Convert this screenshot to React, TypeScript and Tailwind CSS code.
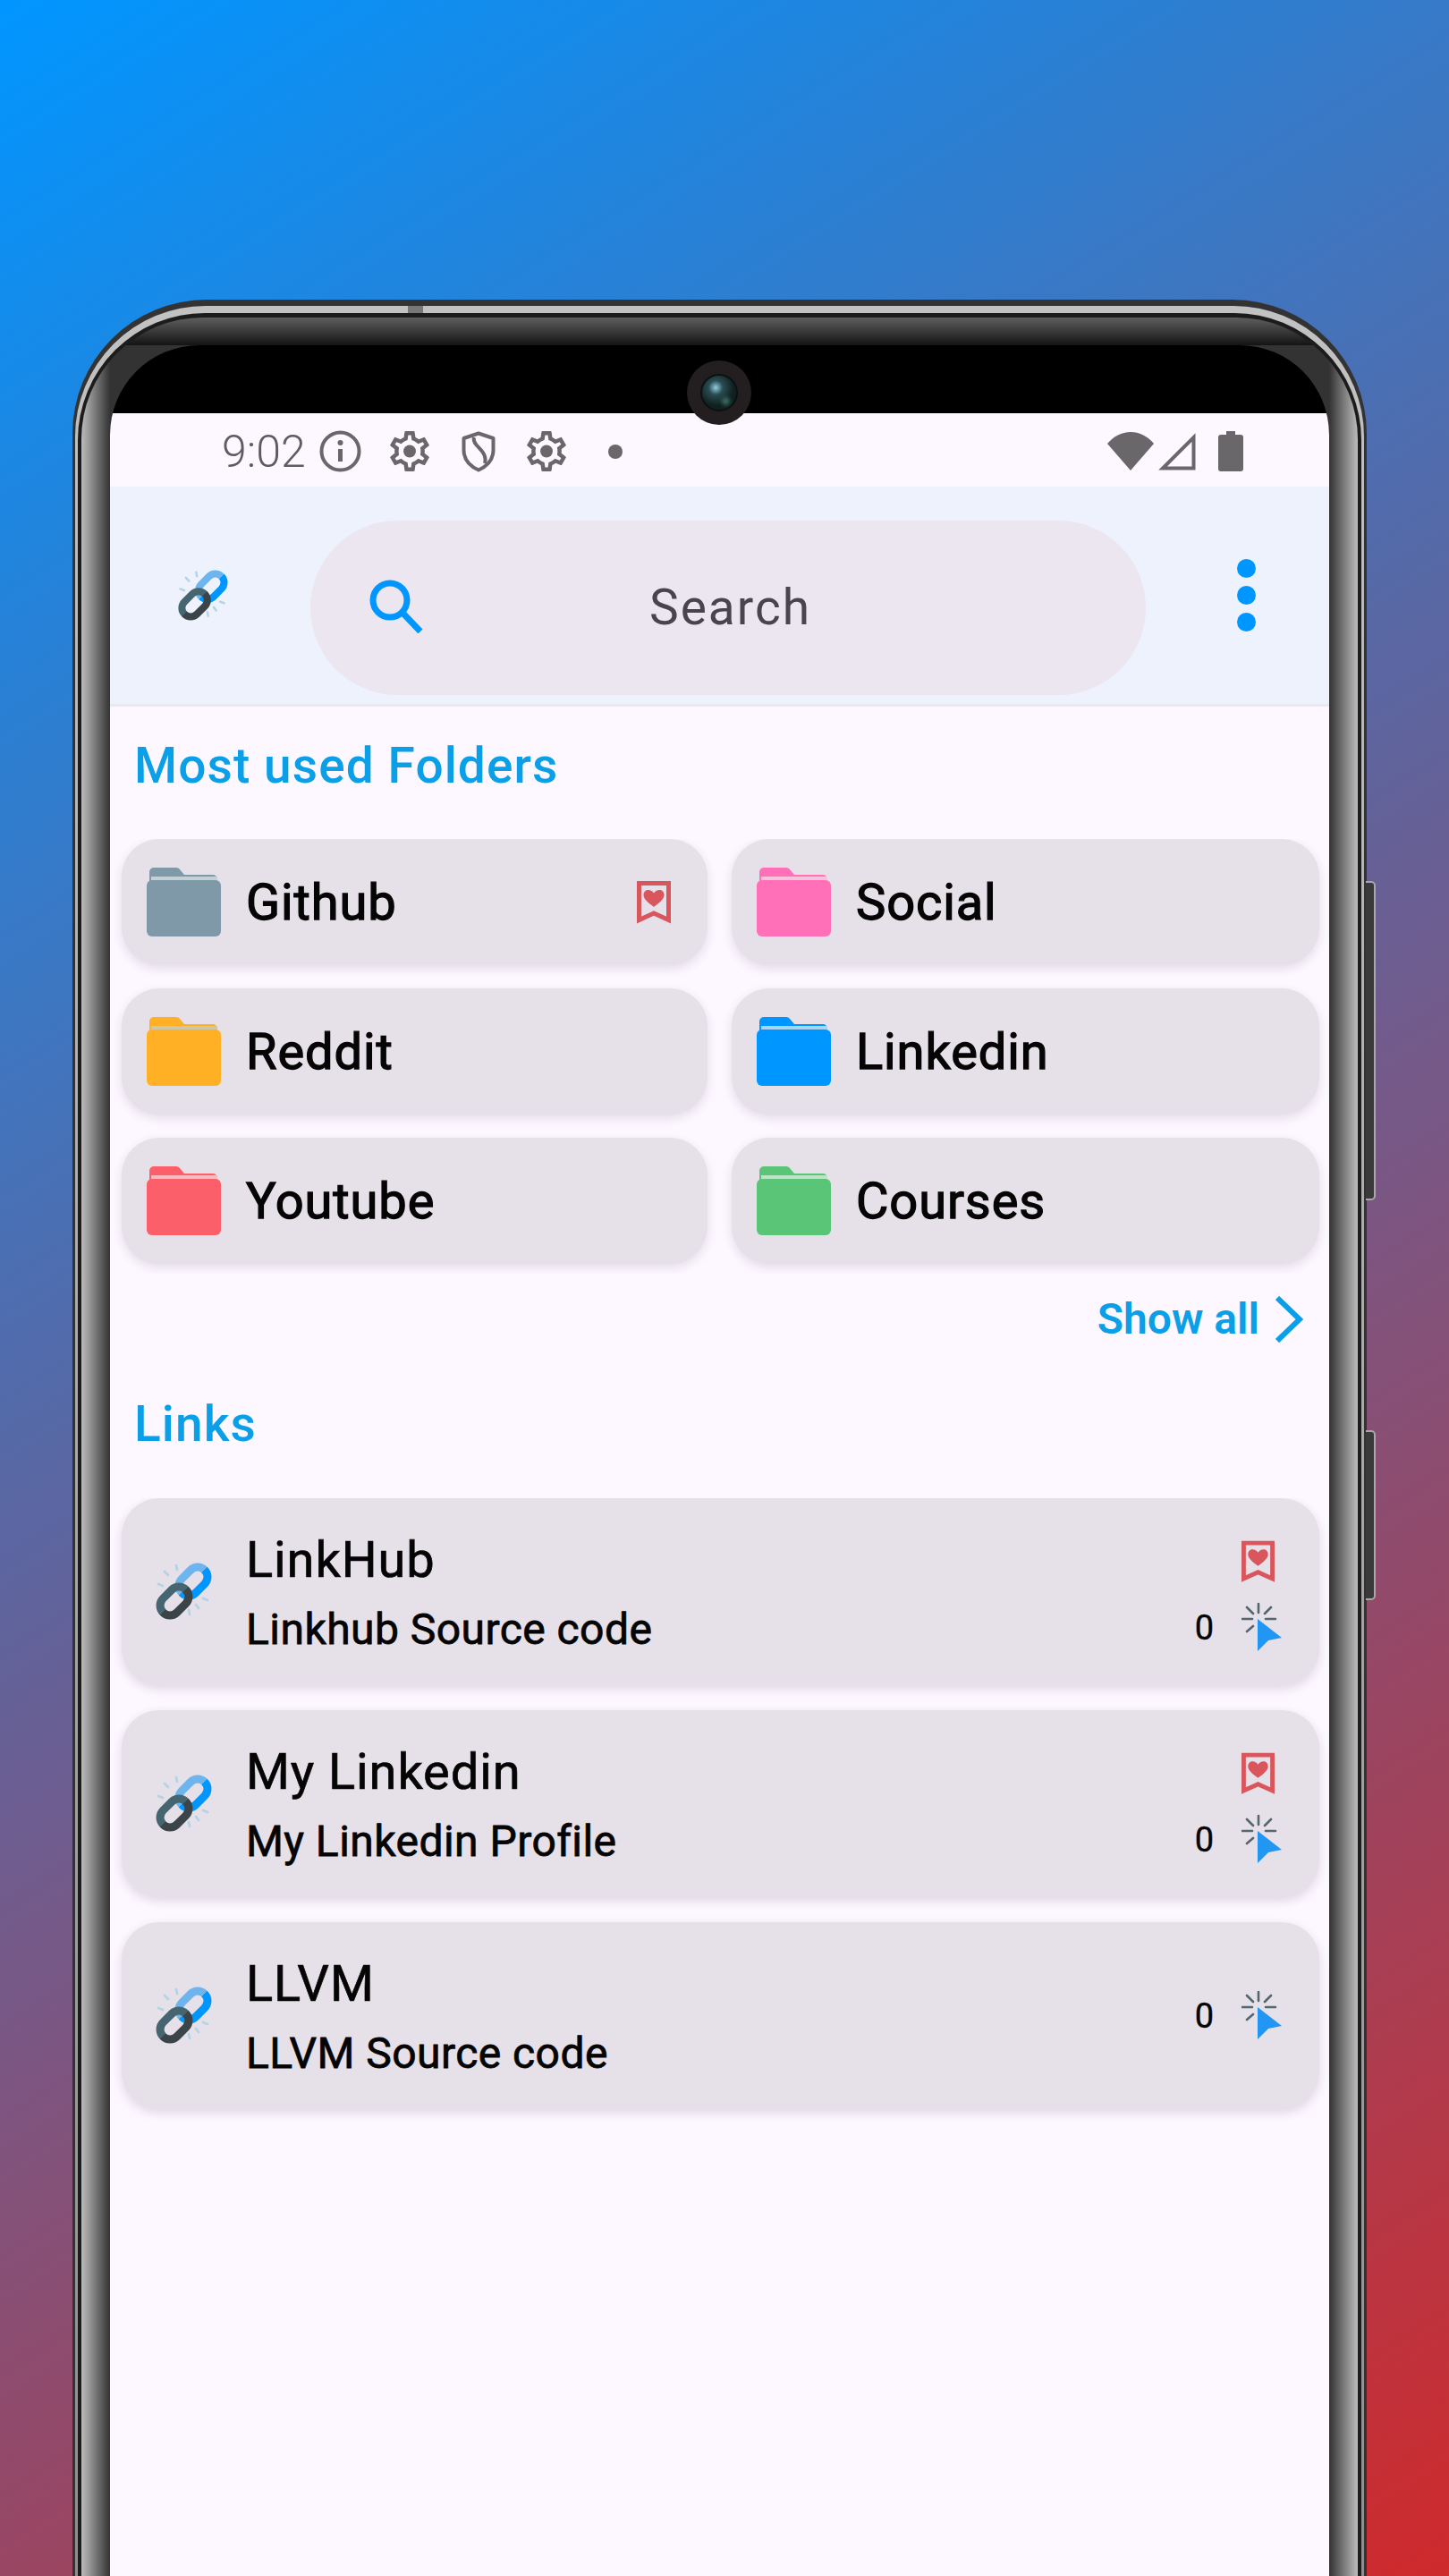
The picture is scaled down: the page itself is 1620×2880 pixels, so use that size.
import React from "react";

const GEAR = "M19.43 12.98c.04-.32.07-.64.07-.98 0-.34-.03-.66-.07-.98l2.11-1.65c.19-.15.24-.42.12-.64l-2-3.46c-.09-.16-.26-.25-.44-.25-.06 0-.12.01-.17.03l-2.49 1c-.52-.4-1.08-.73-1.69-.98l-.38-2.65C14.46 2.18 14.25 2 14 2h-4c-.25 0-.46.18-.49.42l-.38 2.65c-.61.25-1.17.59-1.69.98l-2.49-1c-.06-.02-.12-.03-.18-.03-.17 0-.34.09-.43.25l-2 3.46c-.13.22-.07.49.12.64l2.11 1.65c-.04.32-.07.65-.07.98 0 .33.03.66.07.98l-2.11 1.65c-.19.15-.24.42-.12.64l2 3.46c.09.16.26.25.44.25.06 0 .12-.01.17-.03l2.49-1c.52.4 1.08.73 1.69.98l.38 2.65c.03.24.24.42.49.42h4c.25 0 .46-.18.49-.42l.38-2.65c.61-.25 1.17-.59 1.69-.98l2.49 1c.06.02.12.03.18.03.17 0 .34-.09.43-.25l2-3.46c.12-.22.07-.49-.12-.64l-2.11-1.65zm-1.98-1.71c.04.31.05.52.05.73 0 .21-.02.43-.05.73l-.14 1.13.89.7 1.08.84-.7 1.21-1.27-.51-1.04-.42-.9.68c-.43.32-.84.56-1.25.73l-1.06.43-.16 1.13-.2 1.35h-1.4l-.19-1.35-.16-1.13-1.06-.43c-.43-.18-.83-.41-1.23-.71l-.91-.7-1.06.43-1.27.51-.7-1.21 1.08-.84.89-.7-.14-1.13c-.03-.31-.05-.54-.05-.74s.02-.43.05-.73l.14-1.13-.89-.7-1.08-.84.7-1.21 1.27.51 1.04.42.9-.68c.43-.32.84-.56 1.25-.73l1.06-.43.16-1.13.2-1.35h1.39l.19 1.35.16 1.13 1.06.43c.43.18.83.41 1.23.71l.91.7 1.06-.43 1.27-.51.7 1.21-1.07.85-.89.7.14 1.13z";

function Gear({ className }: { className: string }) {
  return (
    <svg viewBox="2.2 2 19.6 20" className={className} fill="#6a676b">
      <path d={GEAR} />
      <circle cx="12" cy="12" r="3.1" />
    </svg>
  );
}

function Folder({ body, tab, strip }: { body: string; tab: string; strip: string }) {
  return (
    <svg viewBox="0 0 83 77" className="h-[77px] w-[83px] shrink-0">
      <path d="M3 16V5a5 5 0 0 1 5-5h25a5 5 0 0 1 4 2l5 6h32a5 5 0 0 1 5 5v5H3z" fill={tab} />
      <rect x="5" y="10" width="74" height="6" fill={strip} />
      <path d="M0 20a6 6 0 0 1 6-6h71a6 6 0 0 1 6 6v51a6 6 0 0 1-6 6H6a6 6 0 0 1-6-6z" fill={body} />
    </svg>
  );
}

function Bookmark({ className }: { className: string }) {
  return (
    <svg viewBox="0 0 38 48" className={className}>
      <path d="M2.5 2.5h33v41L19 36 2.5 43.5z" fill="none" stroke="#d9575c" strokeWidth="5" />
      <path d="M19 29c-8-6-11.5-9.500-11.500-13.500C7.500 12 10 10 12.700 10c2.700 0 4.800 1.300 6.300 3.600C20.500 11.300 22.600 10 25.300 10c2.700 0 5.200 2 5.200 5.500C30.500 19.500 27 23 19 29z" fill="#d9575c" />
    </svg>
  );
}

function Click() {
  return (
    <svg viewBox="0 0 45 55" className="h-[55px] w-[45px] shrink-0">
      <g stroke="#56666e" strokeWidth="2.600" strokeLinecap="round">
        <path d="M19 1v10M1 18h11M27 18h11M6 5l7 7M33 5l-7 7M6 32l7-6" />
      </g>
      <path d="M18 18l27 21-15 3-12 12z" fill="#2196f3" />
    </svg>
  );
}

function LinkIcon({ className }: { className: string }) {
  return (
    <svg viewBox="0 0 64 65" className={className}>
      <defs>
        <linearGradient id="blueLink" x1="0" y1="0" x2="0" y2="1">
          <stop offset="0.5" stopColor="#6db5ec" />
          <stop offset="0.5" stopColor="#0096ff" />
        </linearGradient>
        <linearGradient id="darkLink" x1="0" y1="0" x2="0" y2="1">
          <stop offset="0.5" stopColor="#456570" />
          <stop offset="0.5" stopColor="#3b4448" />
        </linearGradient>
      </defs>
      <g stroke="#b4d3e6" strokeWidth="2.800" strokeLinecap="round">
        <path d="M11 10l4 4M4 24l5 2M24 3l1 5M54 40l5 2M49 51l-3-4M39 58l-1-5" />
      </g>
      <rect x="25" y="10" width="36" height="22" rx="11" transform="rotate(-45 43 21)" fill="none" stroke="url(#blueLink)" strokeWidth="9" />
      <rect x="4" y="32" width="36" height="22" rx="11" transform="rotate(-45 22 43)" fill="none" stroke="url(#darkLink)" strokeWidth="9" />
    </svg>
  );
}

const folders = [
  { name: "Github", body: "#7f99a9", tab: "#7f99a9", strip: "#c3d0d6", mark: true },
  { name: "Social", body: "#ff70b8", tab: "#ff70b8", strip: "#f6c3dc", mark: false },
  { name: "Reddit", body: "#ffb024", tab: "#ffb024", strip: "#cfc6a8", mark: false },
  { name: "Linkedin", body: "#0096ff", tab: "#0096ff", strip: "#a9d4f3", mark: false },
  { name: "Youtube", body: "#fb5f69", tab: "#fb5f69", strip: "#f2bcc0", mark: false },
  { name: "Courses", body: "#5ac577", tab: "#5ac577", strip: "#bfe2c8", mark: false },
];

const links = [
  { title: "LinkHub", sub: "Linkhub Source code", mark: true },
  { title: "My Linkedin", sub: "My Linkedin Profile", mark: true },
  { title: "LLVM", sub: "LLVM Source code", mark: false },
];

export default function App() {
  return (
    <div className="h-[2880px] w-[1620px] overflow-hidden bg-[linear-gradient(148deg,#0096ff_0%,#cf2a2c_100%)] pl-[81px] pt-[335px] font-['Roboto',sans-serif]">
      <div className="relative h-[2700px] w-[1447px]">
        {/* side buttons */}
        <div className="absolute left-[1446px] top-[650px] h-[357px] w-[11px] rounded-r-[5px] border-2 border-l-0 border-[#a8a8a8] bg-[#3a3a3a]" />
        <div className="absolute left-[1446px] top-[1264px] h-[190px] w-[11px] rounded-r-[5px] border-2 border-l-0 border-[#a8a8a8] bg-[#3a3a3a]" />
        {/* frame */}
        <div className="h-full rounded-t-[150px] bg-[#333333] px-[3px] pt-[7px]">
          <div className="relative h-full rounded-t-[146px] bg-[linear-gradient(180deg,#c2c2c2,#8c8c8c)] px-[3px] pt-[8px]">
            <div className="absolute left-[372px] top-0 h-[8px] w-[17px] bg-[#777777]" />
            <div className="h-full rounded-t-[142px] bg-[#1c1c1c] px-[4px] pt-[5px]">
              <div className="h-full rounded-t-[136px] bg-[linear-gradient(180deg,#5e5e5e_0px,#141414_31px,transparent_31px),linear-gradient(90deg,#bcbcbc_0px,#333333_32px,#333333_calc(100%-32px),#bcbcbc_100%)] px-[32px] pt-[31px]">
                <div className="relative h-full overflow-hidden rounded-t-[100px] bg-black pt-[76px]">
                  {/* camera */}
                  <div className="absolute left-[645px] top-[17px] z-10 flex h-[72px] w-[72px] items-center justify-center rounded-full bg-[#231f20]">
                    <div className="relative h-[42px] w-[42px] rounded-full border-2 border-[#0c1012] bg-[radial-gradient(circle_at_40%_35%,#8fd0dc_0px,#2a4c54_8px,#10201f_20px)]">
                      <div className="absolute left-[22px] top-[24px] h-[9px] w-[9px] rounded-full bg-[#3c6a60] blur-[2px]" />
                    </div>
                  </div>
                  <div className="h-full bg-[#fdf7ff]">
                    {/* status bar */}
                    <div className="flex h-[82px] items-center pl-[125px] pr-[96px] pt-[3px]">
                      <span className="text-[50px] font-light leading-none tracking-[0px] text-[#5f5c60]">9:02</span>
                      <svg viewBox="0 0 47 47" className="ml-[15px] h-[47px] w-[47px]">
                        <circle cx="23.500" cy="23.500" r="21" fill="none" stroke="#6a676b" strokeWidth="4" />
                        <rect x="21" y="21" width="5" height="14" fill="#6a676b" />
                        <circle cx="23.500" cy="14" r="3" fill="#6a676b" />
                      </svg>
                      <Gear className="ml-[32px] h-[45px] w-[44px]" />
                      <svg viewBox="0 0 38 46" className="ml-[36px] h-[46px] w-[38px]">
                        <path d="M19 2.500 35.500 8v13c0 10-6.500 18-16.500 22.500C9 39 2.500 31 2.500 21V8z" fill="none" stroke="#6a676b" strokeWidth="4" strokeLinejoin="round" />
                        <path d="M14 7c-3 10 16 14 12 29" fill="none" stroke="#6a676b" strokeWidth="4" />
                      </svg>
                      <Gear className="ml-[35px] h-[45px] w-[44px]" />
                      <div className="ml-[47px] h-[16px] w-[16px] rounded-full bg-[#6a676b]" />
                      <div className="ml-auto flex items-center">
                        <svg viewBox="0 0 52 43" className="h-[43px] w-[52px]">
                          <path d="M26 43 0 13C7 5 16 0 26 0s19 5 26 13z" fill="#6a676b" />
                        </svg>
                        <svg viewBox="0 0 43 42" className="ml-[4px] h-[42px] w-[43px]">
                          <path d="M40.500 5v34.500H6z" fill="none" stroke="#6a676b" strokeWidth="4" />
                        </svg>
                        <svg viewBox="0 0 28 45" className="ml-[25px] h-[45px] w-[28px]">
                          <path d="M9 0h10v4h6a3 3 0 0 1 3 3v35a3 3 0 0 1-3 3H3a3 3 0 0 1-3-3V7a3 3 0 0 1 3-3h6z" fill="#6a676b" />
                        </svg>
                      </div>
                    </div>

                    {/* top bar */}
                    <div className="flex h-[246px] items-center border-b-[3px] border-[#e9e8f0] bg-[#edf2fd] pl-[75px]">
                      <LinkIcon className="h-[58px] w-[57px]" />
                      <div className="relative ml-[92px] mt-[28px] flex h-[195px] w-[934px] items-center justify-center rounded-full bg-[#ece6f0] pl-[5px]">
                        <svg viewBox="0 0 60 60" className="absolute left-[66px] top-[66px] h-[60px] w-[60px]">
                          <circle cx="23" cy="23" r="19" fill="none" stroke="#0096ff" strokeWidth="7" />
                          <path d="M37 37 57 58" stroke="#0096ff" strokeWidth="7" />
                        </svg>
                        <span className="text-[55px] leading-none tracking-[2px] text-[#49454f]">Search</span>
                      </div>
                      <div className="ml-[102px] flex flex-col gap-[9px]">
                        <div className="h-[21px] w-[21px] rounded-full bg-[#0096ff]" />
                        <div className="h-[21px] w-[21px] rounded-full bg-[#0096ff]" />
                        <div className="h-[21px] w-[21px] rounded-full bg-[#0096ff]" />
                      </div>
                    </div>

                    {/* folders */}
                    <div className="flex h-[148px] items-center pb-[16px] pl-[27px]">
                      <h2 className="text-[55px] font-medium leading-none tracking-[1.100px] text-[#0b9fe8]">Most used Folders</h2>
                    </div>
                    <div className="grid grid-cols-[655px_657px] gap-x-[27px] gap-y-[26px] overflow-hidden pb-[11px] pl-[13px] pr-[11px]">
                      {folders.map((f) => (
                        <div key={f.name} className="flex h-[141px] items-center rounded-[42px] bg-[#e6e0e9] pl-[28px] pr-[41px] shadow-[0_4px_12px_rgba(40,30,60,0.12)]">
                          <Folder body={f.body} tab={f.tab} strip={f.strip} />
                          <span className="ml-[28px] text-[56px] font-normal leading-none tracking-[0.900px] text-[#050505] [-webkit-text-stroke:1.3px_#050505]">{f.name}</span>
                          {f.mark && <Bookmark className="ml-auto h-[48px] w-[38px]" />}
                        </div>
                      ))}
                    </div>
                    <div className="flex h-[102px] items-center justify-end pr-[29px]">
                      <span className="text-[48px] font-semibold leading-none text-[#0b9fe8]">Show all</span>
                      <svg viewBox="0 0 31 52" className="ml-[18px] h-[52px] w-[31px]">
                        <path d="M2 2 27 26 2 50" fill="none" stroke="#0b9fe8" strokeWidth="6" />
                      </svg>
                    </div>

                    {/* links */}
                    <div className="flex h-[149px] items-center pb-[16px] pl-[27px]">
                      <h2 className="text-[55px] font-medium leading-none tracking-[1.100px] text-[#0b9fe8]">Links</h2>
                    </div>
                    <div className="flex flex-col gap-[28px] overflow-hidden pb-[13px] pl-[13px] pr-[11px]">
                      {links.map((l) => (
                        <div key={l.title} className="flex h-[209px] items-center rounded-[42px] bg-[#e6e0e9] pl-[37px] pr-[42px] shadow-[0_4px_12px_rgba(40,30,60,0.14)]">
                          <LinkIcon className="h-[65px] w-[64px] shrink-0" />
                          <div className="ml-[38px] mt-[6px] flex flex-col text-[#050505]">
                            <span className="text-[56px] font-normal leading-[77px] tracking-[0.900px] [-webkit-text-stroke:0.7px_#050505]">{l.title}</span>
                            <span className="text-[48px] font-normal leading-[77px] tracking-[0.450px] [-webkit-text-stroke:0.8px_#050505]">{l.sub}</span>
                          </div>
                          <div className={l.mark ? "ml-auto flex flex-col items-end pt-[10px]" : "ml-auto flex flex-col items-end"}>
                            {l.mark && <Bookmark className="mb-[22px] mr-[8px] h-[48px] w-[37px]" />}
                            <div className="flex items-center">
                              <span className="text-[38px] font-normal leading-none text-[#050505] [-webkit-text-stroke:0.4px_#050505]">0</span>
                              <div className="ml-[31px]">
                                <Click />
                              </div>
                            </div>
                          </div>
                        </div>
                      ))}
                    </div>
                  </div>
                </div>
              </div>
            </div>
          </div>
        </div>
      </div>
    </div>
  );
}
